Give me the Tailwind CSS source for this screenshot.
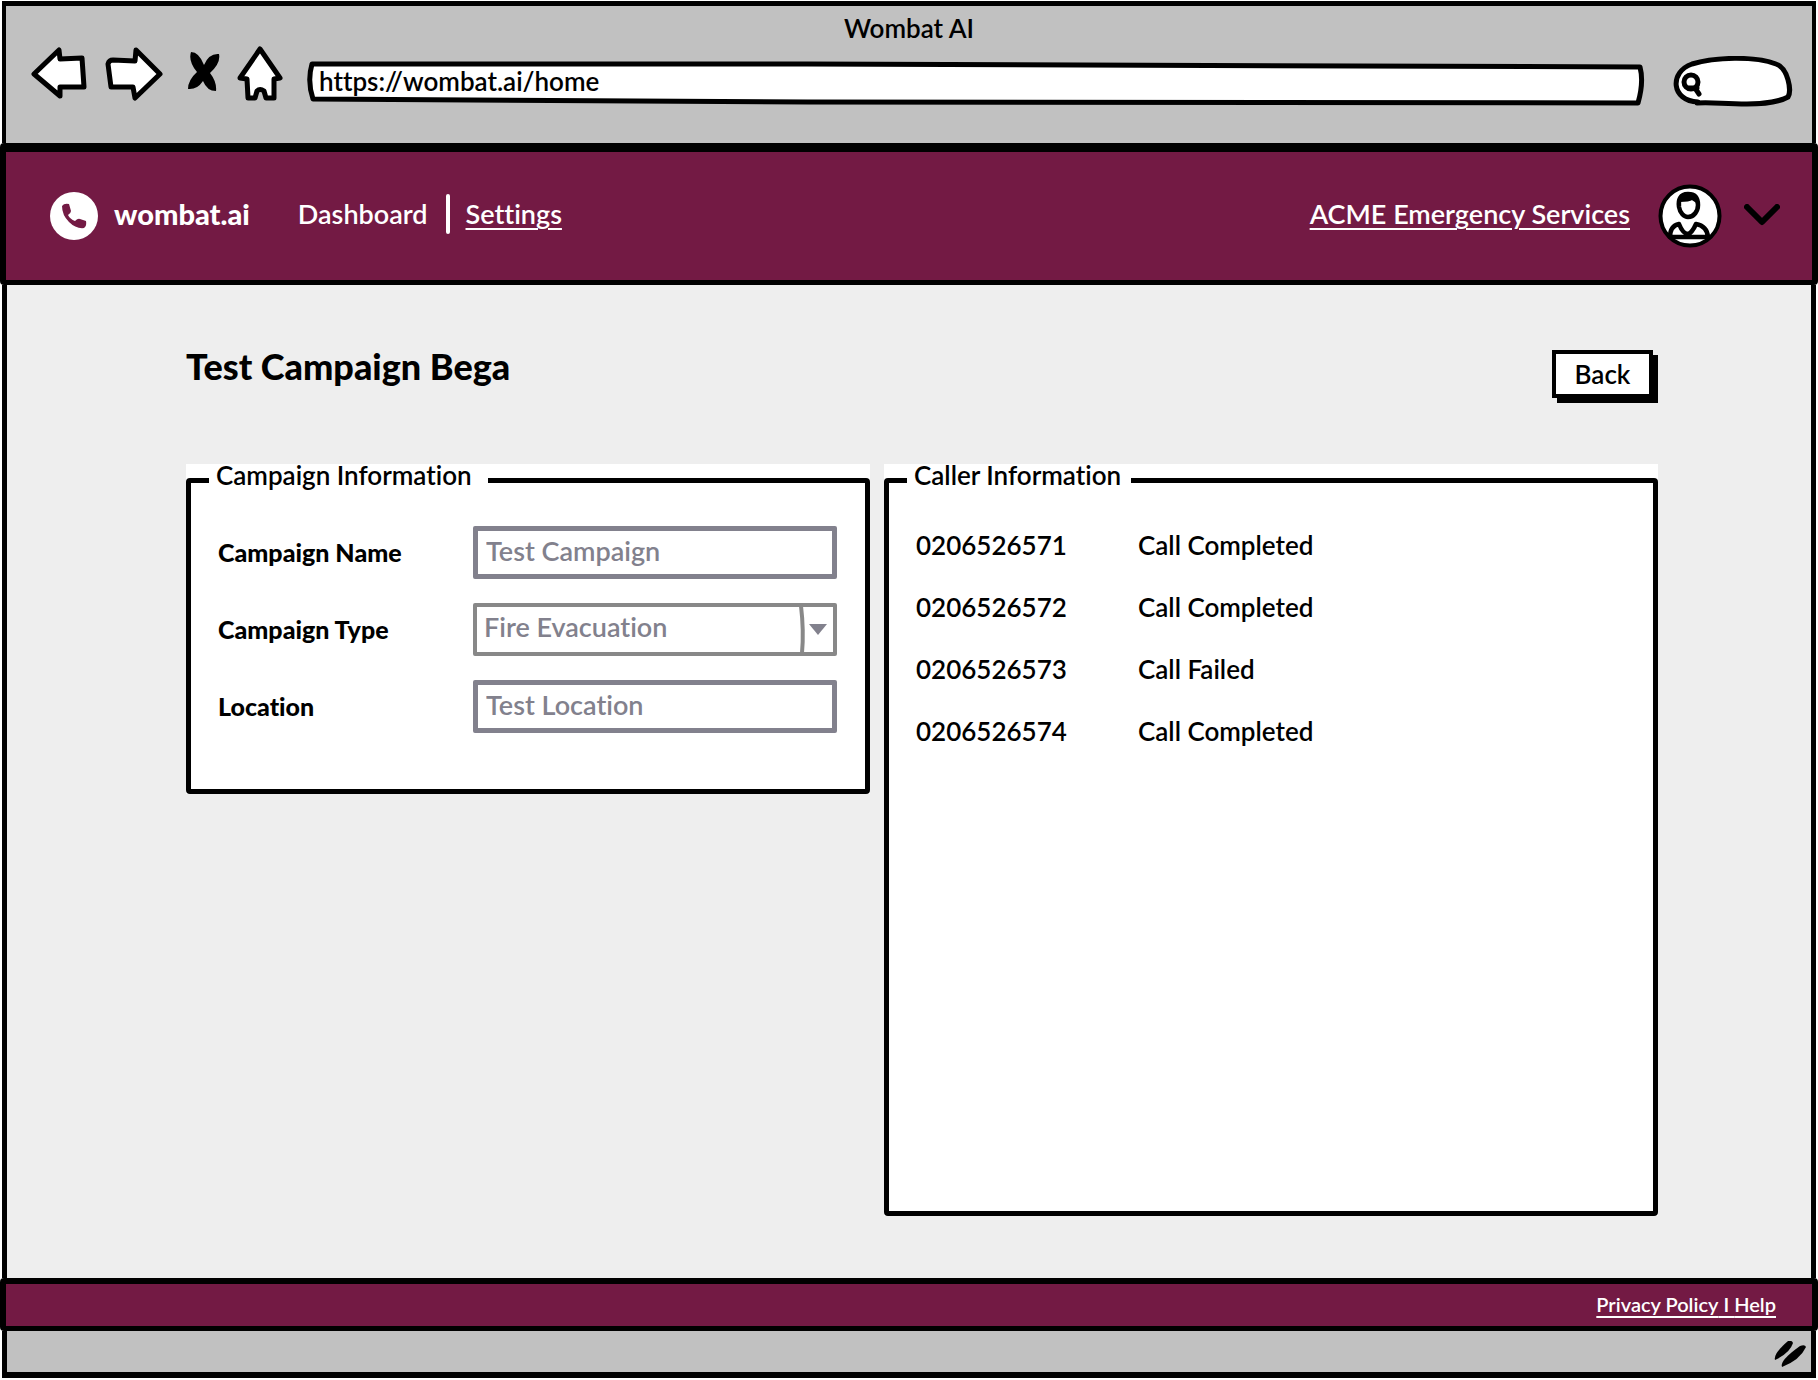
<!DOCTYPE html>
<html lang="en">
<head>
<meta charset="utf-8">
<title>Wombat AI</title>
<meta name="viewport" content="width=device-width, initial-scale=1">
<script src="https://cdn.jsdelivr.net/npm/@tailwindcss/browser@4"></script>
</head>
<body class="min-h-screen bg-white font-['Lato',sans-serif] text-[26px] font-semibold leading-8 text-black [font-variant-ligatures:none]">
<div class="flex min-h-screen flex-col pt-px pb-0.5">

  <!-- Browser chrome -->
  <div class="mx-0.5 border-x-4 border-t-[5px] border-black bg-[#c1c1c1]">
    <div class="flex h-[137px] flex-col">
      <div class="pt-1.5 text-center">Wombat AI</div>
      <div class="flex items-start pr-[18px] pl-[25px]">
        <button type="button" aria-label="Back" class="mr-[18px]">
          <svg class="block h-[60px] w-14" viewBox="0 0 56 60" fill="#fff" stroke="#000" stroke-width="5" stroke-linejoin="round"><path d="M3 30 L28 6 L29 15 L51 14 L53 43 L29 43 L29 52 Z"/></svg>
        </button>
        <button type="button" aria-label="Forward" class="mr-[25px]">
          <svg class="block h-[60px] w-[58px]" viewBox="0 0 58 60" fill="#fff" stroke="#000" stroke-width="5" stroke-linejoin="round"><path d="M3 20 Q4 16 8 16 L30 17 L31 6 L55 30 L30 54 L28 43 L6 43 Z"/></svg>
        </button>
        <button type="button" aria-label="Stop" class="mr-[17px]">
          <svg class="block h-[60px] w-8" viewBox="0 0 32 60"><path d="M3 8 Q11 8 16 21 Q21 9 31 10 Q33 19 22 29 Q29 38 28 47 Q19 47 15 37 Q9 46 0 45 Q0 36 9 28 Q0 17 3 8 Z"/></svg>
        </button>
        <button type="button" aria-label="Home" class="mr-6">
          <svg class="block h-[60px] w-[46px]" viewBox="0 0 46 60" fill="#fff" stroke="#000" stroke-width="5" stroke-linejoin="round"><path d="M23 5 L43 34 L37 35 L37 54 L29 54 L27 47 Q23 44 20 47 L18 54 L11 54 L10 35 L3 34 Z"/></svg>
        </button>
        <div class="relative mr-[28px] flex h-[62px] flex-1 items-center">
          <svg class="absolute inset-0 size-full" viewBox="0 0 1337 62" preserveAspectRatio="none" fill="#fff" stroke="#000" stroke-width="5" stroke-linejoin="round"><path d="M5 20 L500 20 L1332 23 Q1336 38 1330 59 L500 58 L6 55 Q0 37 5 20 Z"/></svg>
          <input aria-label="Address" type="text" value="https://wombat.ai/home" class="relative mt-3 h-8 w-full bg-transparent px-3 outline-none">
        </div>
        <div class="relative mt-3 h-[52px] w-[121px]">
          <svg class="absolute inset-0 size-full" viewBox="0 0 121 52" fill="#fff" stroke="#000" stroke-width="5" stroke-linejoin="round" stroke-linecap="round"><path d="M25 46 C-2 45 -4 16 19 8 C42 1 82 0 103 8 C115 12 119 35 115 41 C108 45 92 48 74 48 C50 48 40 46 24 47"/><circle cx="18" cy="26" r="7"/><path d="M16 32 L24 32 M22 32 L26 38"/></svg>
          <input aria-label="Search" type="search" class="relative h-full w-full appearance-none bg-transparent pr-3 pl-8 outline-none">
        </div>
      </div>
    </div>
  </div>

  <!-- Site header -->
  <header class="flex h-[142px] items-center rounded-sm border-x-[6px] border-t-[9px] border-b-[5px] border-black bg-[#731a44] pr-[32px] pl-11 text-[27px] text-white">
    <a href="#" class="flex items-center gap-4 text-[29px] font-black">
      <svg class="size-12" viewBox="0 0 48 48"><circle cx="24" cy="24" r="24" fill="#fff"/><path fill="#731a44" d="M12 14 Q14 11 19 12 L21 19 Q21 21 18 23 Q20 27 25 29 Q28 26 30 27 L36 29 Q37 34 34 36 Q26 37 19 30 Q12 23 12 14 Z"/></svg>
      <span class="pb-1">wombat.ai</span>
    </a>
    <nav class="ml-12 flex items-center pb-1">
      <a href="#">Dashboard</a>
      <span class="mr-4 ml-[18px] h-10 w-1 rounded-full bg-white"></span>
      <a href="#" class="underline decoration-2 underline-offset-4">Settings</a>
    </nav>
    <a href="#" class="ml-auto pb-1 underline decoration-2 underline-offset-4">ACME Emergency Services</a>
    <button type="button" aria-label="Account menu" class="ml-7 flex items-center gap-[22px]">
      <svg class="size-16" viewBox="0 0 64 64" fill="none" stroke="#000" stroke-width="4.500" stroke-linecap="round" stroke-linejoin="round"><circle cx="32" cy="32" r="29.500" fill="#fff" stroke-width="4"/><path d="M30 10 C22 10 20 16 21 23 C22 29 26 33 30 33 C36 33 40 27 40 21 C40 14 37 10 30 10 Z"/><path fill="#000" stroke-width="2" d="M21 17 Q21 10 30 9 Q39 10 40 19 L34 15 Q31 17 22 17 Z"/><path d="M12 53 Q12 42 21 40 Q25 50 30 50 Q34 49 38 40 Q49 42 50 53 Z"/></svg>
      <svg class="h-6 w-9" viewBox="0 0 36 24" fill="none" stroke="#000" stroke-width="6" stroke-linecap="round" stroke-linejoin="round"><path d="M3 3 L18 18 L33 3"/></svg>
    </button>
  </header>

  <!-- Page content -->
  <main class="mx-0.5 flex flex-1 flex-col border-x-[5px] border-black bg-[#eee] pt-[65px] pr-[153px] pb-[62px] pl-[179px]">
    <div class="flex h-[114px] items-start justify-between">
      <h1 class="text-[36px] font-black">Test Campaign Bega</h1>
      <button type="button" class="mr-[5px] h-12 w-[101px] border-4 border-black bg-white shadow-[5px_5px_0_0_#000]">Back</button>
    </div>

    <div class="grid flex-1 grid-cols-[684fr_774fr] gap-3.5">
      <section class="flex flex-col self-start bg-white">
        <fieldset class="rounded-sm border-[5px] border-black pt-[30px] pr-7 pb-14 pl-[27px]">
          <legend class="-ml-[9px] pr-4 pb-2.5 pl-[7px] leading-[22px]">Campaign Information</legend>
          <div class="grid grid-cols-[255px_1fr] items-center gap-y-6 text-[27px] text-[#82818d]">
            <label for="name" class="pb-0.5 text-[25px] font-black text-black">Campaign Name</label>
            <input id="name" type="text" value="Test Campaign" class="h-[53px] w-full rounded-xs border-[5px] border-[#82818d] bg-white px-2 pb-1">
            <label for="type" class="pb-0.5 text-[25px] font-black text-black">Campaign Type</label>
            <div class="relative">
              <select id="type" class="block h-[53px] w-full appearance-none rounded-xs border-4 border-[#888] bg-white pr-11 pb-1.5 pl-[7px]">
                <option>Fire Evacuation</option>
              </select>
              <svg class="pointer-events-none absolute top-0 right-0 h-[53px] w-10" viewBox="0 0 40 53"><path d="M4 3 Q7 28 5 50" fill="none" stroke="#888" stroke-width="4"/><path d="M12 21 H30 L21 32 Z" fill="#82818d"/></svg>
            </div>
            <label for="location" class="pb-0.5 text-[25px] font-black text-black">Location</label>
            <input id="location" type="text" value="Test Location" class="h-[53px] w-full rounded-xs border-[5px] border-[#82818d] bg-white px-2 pb-1">
          </div>
        </fieldset>
      </section>

      <section class="flex flex-col bg-white">
        <fieldset class="flex-1 rounded-sm border-[5px] border-black px-[27px] pt-[18px]">
          <legend class="-ml-[9px] pr-2.5 pb-2.5 pl-[7px] leading-[22px]">Caller Information</legend>
          <table class="text-left">
            <tbody>
              <tr class="h-[62px]"><td class="w-[222px]">0206526571</td><td>Call Completed</td></tr>
              <tr class="h-[62px]"><td>0206526572</td><td>Call Completed</td></tr>
              <tr class="h-[62px]"><td>0206526573</td><td>Call Failed</td></tr>
              <tr class="h-[62px]"><td>0206526574</td><td>Call Completed</td></tr>
            </tbody>
          </table>
        </fieldset>
      </section>
    </div>
  </main>

  <!-- Site footer -->
  <footer class="flex h-[53px] items-center justify-end rounded-sm border-x-[6px] border-t-[6px] border-b-[5px] border-black bg-[#731a44] pr-9 text-xl text-white">
    <a href="#" class="pb-0.5 underline decoration-2 underline-offset-4">Privacy Policy</a><span class="pb-0.5 whitespace-pre underline decoration-2 underline-offset-4"> I </span><a href="#" class="pb-0.5 underline decoration-2 underline-offset-4">Help</a>
  </footer>

  <!-- Window status bar -->
  <div class="mx-0.5 flex h-[47px] items-center justify-end border-x-[5px] border-b-[6px] border-black bg-[#c1c1c1] pt-1 pr-[5px]">
    <svg class="h-[26px] w-8" viewBox="0 0 32 26"><path d="M1 19 Q-1 13 14 0 Q18 -1 19 2 Q16 12 1 19 Z"/><path d="M8 26 Q5 20 26 5 Q31 3 32 6 Q26 19 8 26 Z"/></svg>
  </div>
</div>
</body>
</html>
